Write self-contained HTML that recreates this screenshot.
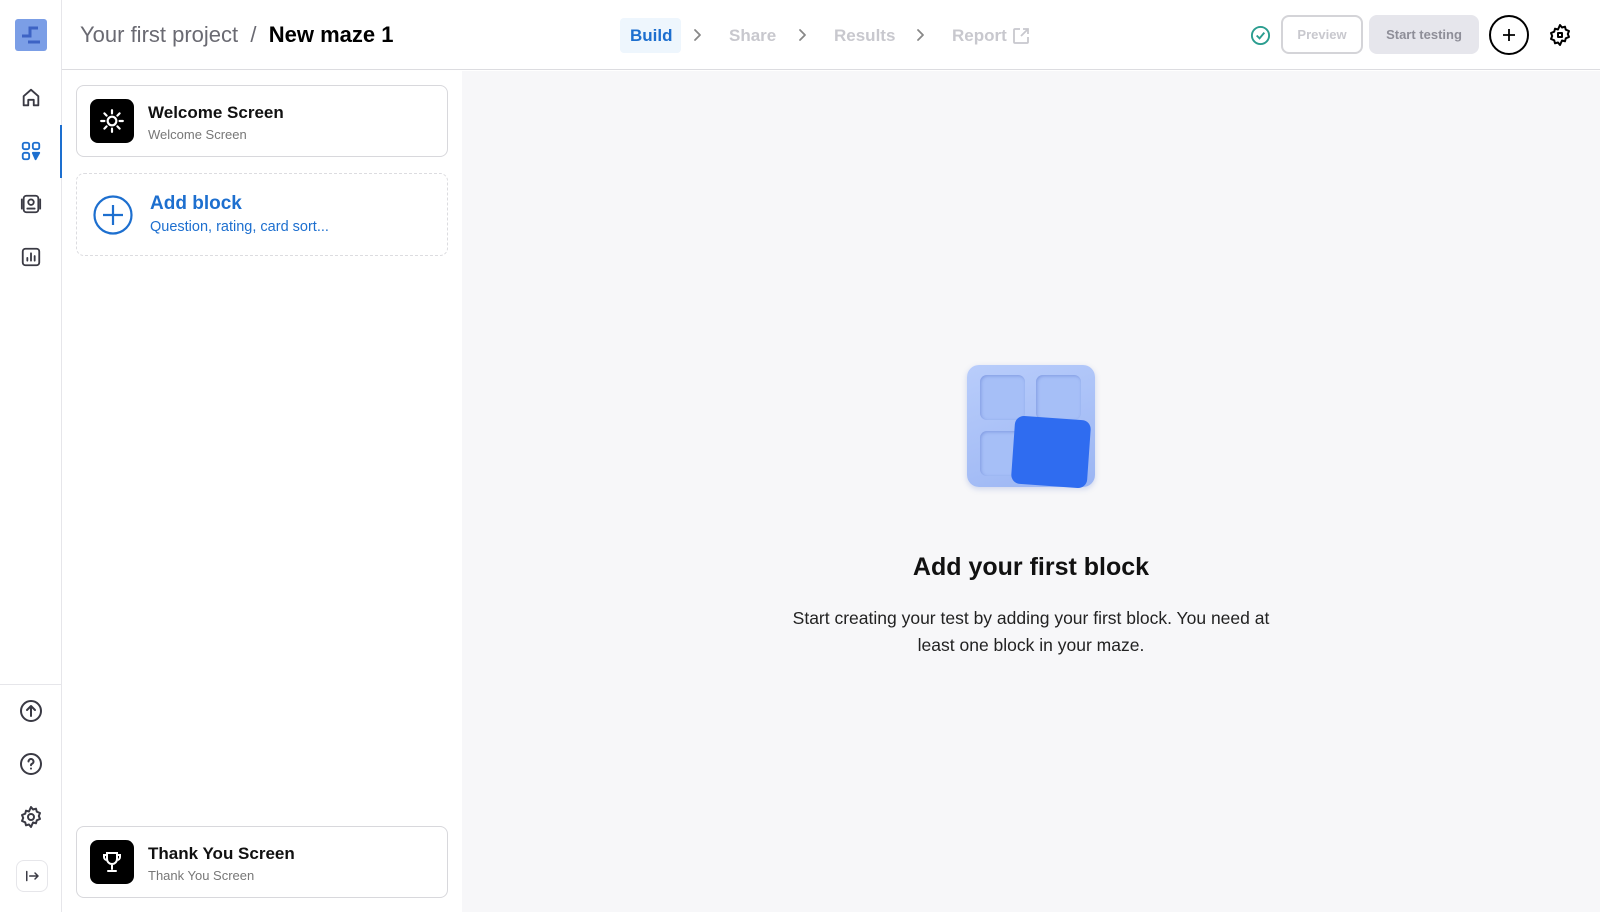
<!DOCTYPE html>
<html><head><meta charset="utf-8"><style>
*{box-sizing:border-box;margin:0;padding:0}
body{width:1600px;height:912px;overflow:hidden;background:#fff;font-family:"Liberation Sans",sans-serif;position:relative;color:#111}
.abs{position:absolute}
.hdr{left:62px;top:0;width:1538px;height:70px;border-bottom:1px solid #dcdce0;background:#fff}
.side{left:0;top:0;width:62px;height:912px;border-right:1px solid #e6e6ea;background:#fff}
.main{left:462px;top:71px;width:1138px;height:841px;background:#f7f7f9}
.card{border:1px solid #d8d8dc;border-radius:8px;background:#fff}
.ic{width:44px;height:44px;background:#000;border-radius:8px;display:flex;align-items:center;justify-content:center}
svg.i{fill:none;stroke:#3a3a44;stroke-width:2;stroke-linecap:round;stroke-linejoin:round}
svg.ch{fill:none;stroke:#888;stroke-width:1.8;stroke-linecap:round;stroke-linejoin:round}
</style></head><body>
<div class="abs side">
 <div class="abs" style="left:15px;top:19px;width:32px;height:32px;background:#7b9ee6;border-radius:3px"></div>
 <svg class="abs" style="left:18px;top:22px" width="26" height="26" viewBox="0 0 26 26"><path d="M4 14h8V6h8M10 20h12" stroke="#3d63c4" stroke-width="3" fill="none"/></svg>
 <svg class="abs i" style="left:20px;top:87px" width="22" height="22" viewBox="0 0 24 24"><path d="M4 20V10l8-7 8 7v10h-5v-6h-6v6z"/></svg>
 <svg class="abs i" style="left:20px;top:140px;stroke:#1d6fcf" width="22" height="22" viewBox="0 0 24 24"><rect x="3" y="3" width="7" height="7" rx="2"/><rect x="14" y="3" width="7" height="7" rx="2"/><rect x="3" y="14" width="7" height="7" rx="2"/><path d="M14 14h7l-4 7z" fill="#1d6fcf"/></svg>
 <div class="abs" style="left:60px;top:125px;width:2px;height:53px;background:#1d6fcf"></div>
 <svg class="abs i" style="left:20px;top:193px" width="22" height="22" viewBox="0 0 24 24"><rect x="4" y="3" width="16" height="18" rx="3"/><circle cx="12" cy="10" r="3"/><path d="M8 17h8M2 7v10M22 7v10"/></svg>
 <svg class="abs i" style="left:20px;top:246px" width="22" height="22" viewBox="0 0 24 24"><rect x="3" y="3" width="18" height="18" rx="3"/><path d="M8 16v-3M12 16V8M16 16v-5"/></svg>
 <div class="abs" style="left:0;top:684px;width:62px;border-top:1px solid #e6e6ea"></div>
 <svg class="abs i" style="left:19px;top:699px" width="24" height="24" viewBox="0 0 24 24"><circle cx="12" cy="12" r="10"/><path d="M12 17V7M8 11l4-4 4 4"/></svg>
 <svg class="abs i" style="left:19px;top:752px" width="24" height="24" viewBox="0 0 24 24"><circle cx="12" cy="12" r="10"/><path d="M9.5 9.5a2.5 2.5 0 1 1 3.5 2.3c-.6.3-1 .8-1 1.4M12 16.5v.1"/></svg>
 <svg class="abs i" style="left:19px;top:805px" width="24" height="24" viewBox="0 0 24 24"><circle cx="12" cy="12" r="3"/><path d="M12 2l2 2.5 3-.8.8 3L21 8l-1.2 3L21 14l-3.2 1.3-.8 3-3-.8L12 22l-2-2.5-3 .8-.8-3L3 16l1.2-3L3 10l3.2-1.3.8-3 3 .8z"/></svg>
 <div class="abs" style="left:16px;top:860px;width:32px;height:32px;border:1px solid #e6e6ea;border-radius:8px"></div>
 <svg class="abs i" style="left:23px;top:867px" width="18" height="18" viewBox="0 0 24 24"><path d="M5 6v12M9 12h11M16 8l4 4-4 4"/></svg>
</div>
<div class="abs hdr">
 <div class="abs" style="left:18px;top:22px;font-size:22px;color:#6a6a72;white-space:nowrap">Your first project&nbsp; /&nbsp; <b style="color:#000">New maze 1</b></div>
 <div class="abs" style="left:558px;top:18px;width:61px;height:35px;background:#eef6fd;border-radius:4px"></div>
 <div class="abs" style="left:568px;top:26px;font-size:17px;font-weight:bold;color:#1d6fcf">Build</div>
 <svg class="abs ch" style="left:630px;top:28px" width="10" height="14" viewBox="0 0 10 14"><path d="M3 2l5 5-5 5"/></svg>
 <div class="abs" style="left:667px;top:26px;font-size:17px;font-weight:bold;color:#c8c8ce">Share</div>
 <svg class="abs ch" style="left:735px;top:28px" width="10" height="14" viewBox="0 0 10 14"><path d="M3 2l5 5-5 5"/></svg>
 <div class="abs" style="left:772px;top:26px;font-size:17px;font-weight:bold;color:#c8c8ce">Results</div>
 <svg class="abs ch" style="left:853px;top:28px" width="10" height="14" viewBox="0 0 10 14"><path d="M3 2l5 5-5 5"/></svg>
 <div class="abs" style="left:890px;top:26px;font-size:17px;font-weight:bold;color:#c8c8ce">Report</div>
 <svg class="abs" style="left:950px;top:27px" width="18" height="18" viewBox="0 0 18 18" fill="none" stroke="#c8c8ce" stroke-width="1.8"><path d="M8 2H3a1 1 0 0 0-1 1v12a1 1 0 0 0 1 1h12a1 1 0 0 0 1-1v-5M11 2h5v5M16 2l-7 7"/></svg>
 <svg class="abs" style="left:1188px;top:25px" width="21" height="21" viewBox="0 0 22 22" fill="none" stroke="#2a9d8f" stroke-width="2"><circle cx="11" cy="11" r="9"/><path d="M7 11l3 3 5-6"/></svg>
 <div class="abs" style="left:1219px;top:15px;width:82px;height:39px;border:2px solid #d4d4d8;border-radius:8px;font-size:13px;font-weight:bold;color:#c8c8ce;text-align:center;line-height:35px">Preview</div>
 <div class="abs" style="left:1307px;top:15px;width:110px;height:39px;background:#e6e6ec;border-radius:8px;font-size:13px;font-weight:bold;color:#8e8e98;text-align:center;line-height:39px">Start testing</div>
 <div class="abs" style="left:1427px;top:15px;width:40px;height:40px;border:2px solid #000;border-radius:50%"></div>
 <svg class="abs" style="left:1438px;top:26px" width="18" height="18" viewBox="0 0 18 18" stroke="#000" stroke-width="1.8"><path d="M9 3v12M3 9h12"/></svg>
 <svg class="abs i" style="left:1486px;top:23px;stroke:#000" width="24" height="24" viewBox="0 0 24 24"><rect x="10" y="10" width="4" height="4"/><path d="M12 2l2 2.5 3-.8.8 3L21 8l-1.2 3L21 14l-3.2 1.3-.8 3-3-.8L12 22l-2-2.5-3 .8-.8-3L3 16l1.2-3L3 10l3.2-1.3.8-3 3 .8z"/></svg>
</div>
<div class="abs card" style="left:76px;top:85px;width:372px;height:72px">
 <div class="abs ic" style="left:13px;top:13px"><svg width="26" height="26" viewBox="0 0 24 24" fill="none" stroke="#fff" stroke-width="2" stroke-linecap="round"><circle cx="12" cy="12" r="4"/><path d="M12 2v3M12 19v3M2 12h3M19 12h3M5 5l2 2M17 17l2 2M5 19l2-2M17 7l2-2"/></svg></div>
 <div class="abs" style="left:71px;top:17px;font-size:17px;font-weight:bold">Welcome Screen</div>
 <div class="abs" style="left:71px;top:41px;font-size:13px;color:#777">Welcome Screen</div>
</div>
<div class="abs" style="left:76px;top:173px;width:372px;height:83px;border:1px dashed #dcdce0;border-radius:8px;background:#fff">
 <svg class="abs" style="left:16px;top:21px" width="40" height="40" viewBox="0 0 40 40" fill="none" stroke="#1d6fcf" stroke-width="2.2"><circle cx="20" cy="20" r="18.5"/><path d="M20 10v20M10 20h20"/></svg>
 <div class="abs" style="left:73px;top:19px;font-size:19px;font-weight:bold;color:#1d6fcf">Add block</div>
 <div class="abs" style="left:73px;top:45px;font-size:14.5px;color:#1d6fcf">Question, rating, card sort...</div>
</div>
<div class="abs card" style="left:76px;top:826px;width:372px;height:72px">
 <div class="abs ic" style="left:13px;top:13px"><svg width="24" height="24" viewBox="0 0 24 24" fill="none" stroke="#fff" stroke-width="2" stroke-linecap="round"><path d="M7 3h10v6a5 5 0 0 1-10 0zM7 5H4v2a3 3 0 0 0 3 3M17 5h3v2a3 3 0 0 1-3 3M12 14v5M8 21h8"/></svg></div>
 <div class="abs" style="left:71px;top:17px;font-size:17px;font-weight:bold">Thank You Screen</div>
 <div class="abs" style="left:71px;top:41px;font-size:13px;color:#777">Thank You Screen</div>
</div>
<div class="abs main">
 <div class="abs" style="left:505px;top:294px;width:128px;height:122px;background:linear-gradient(160deg,#b9cdfb,#9bb5f3);border-radius:12px;box-shadow:0 2px 6px rgba(80,110,200,.25)"></div>
 <div class="abs" style="left:518px;top:304px;width:45px;height:45px;border-radius:7px;background:#a6bff7;box-shadow:inset 1px 1px 3px rgba(60,90,190,.35)"></div>
 <div class="abs" style="left:574px;top:304px;width:45px;height:45px;border-radius:7px;background:#a6bff7;box-shadow:inset 1px 1px 3px rgba(60,90,190,.35)"></div>
 <div class="abs" style="left:518px;top:360px;width:45px;height:45px;border-radius:7px;background:#a6bff7;box-shadow:inset 1px 1px 3px rgba(60,90,190,.35)"></div>
 <div class="abs" style="left:551px;top:347px;width:76px;height:68px;border-radius:9px;background:#2f6cf0;transform:rotate(4deg)"></div>
 <div class="abs" style="left:0;top:482px;width:1138px;text-align:center;font-size:25px;font-weight:bold">Add your first block</div>
 <div class="abs" style="left:0;top:534px;width:1138px;text-align:center;font-size:17.5px;line-height:27px;color:#222">Start creating your test by adding your first block. You need at<br>least one block in your maze.</div>
</div>
</body></html>
